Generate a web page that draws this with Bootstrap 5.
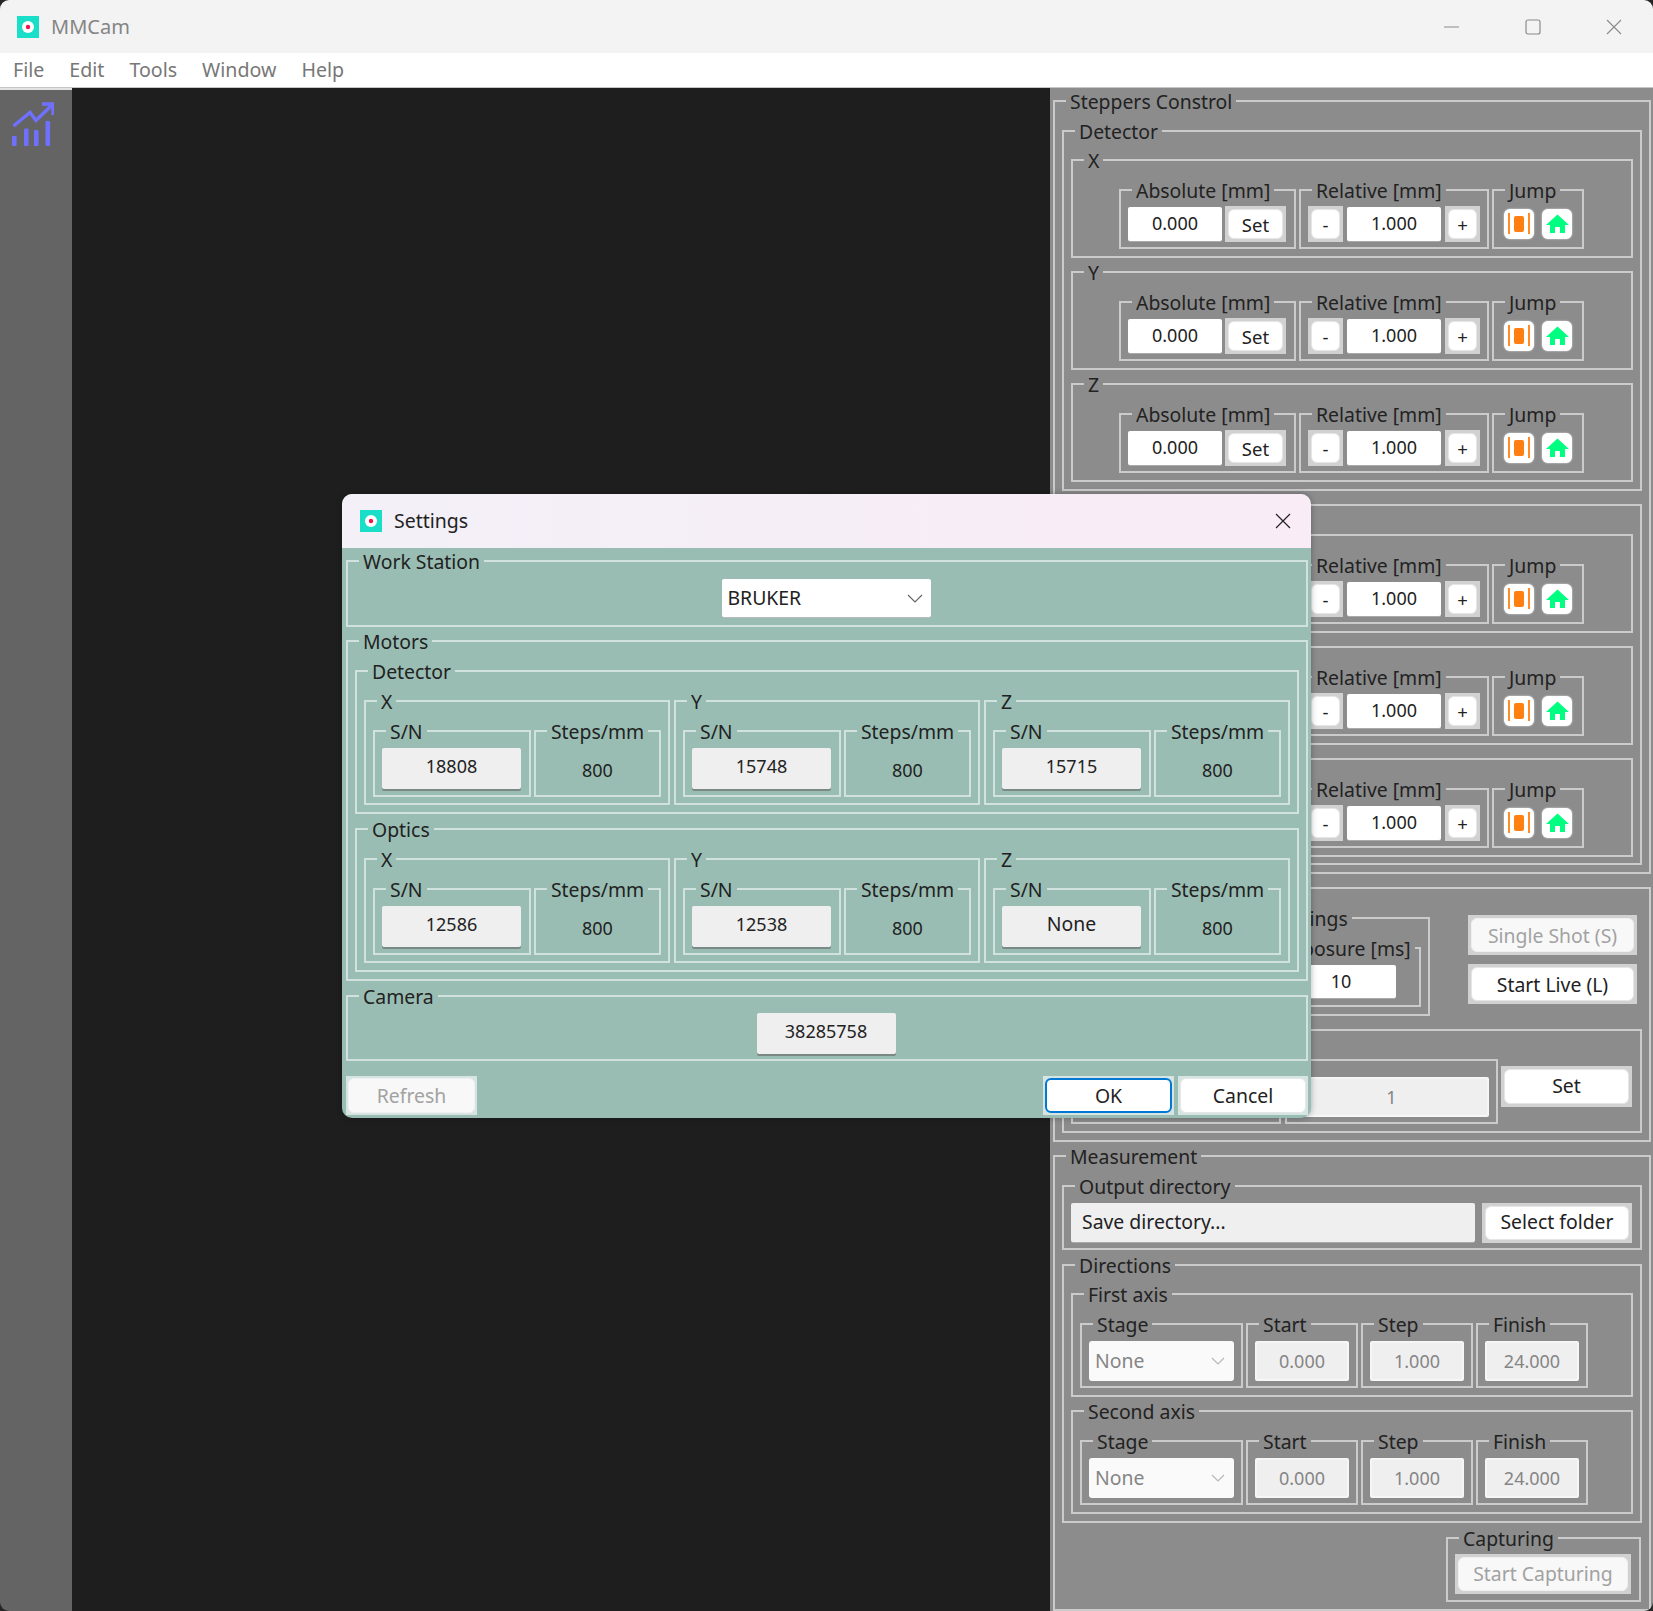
<!DOCTYPE html>
<html lang="en">
<head>
    <meta charset="UTF-8">
    <meta name="viewport" content="width=device-width, initial-scale=1.0">
    <title>MMCam</title>
    <link href="https://cdn.jsdelivr.net/npm/bootstrap@5.3.0/dist/css/bootstrap.min.css" rel="stylesheet">
    <style>
        html, body { height: 100%; }
        body { margin: 0; background: #262626; overflow: hidden; font-family: "Noto Sans", sans-serif; font-size: 19.4px; color: #222; }
        .app-window { width: 1653px; height: 1611px; border-radius: 9px; overflow: hidden; }
        .title-bar { height: 53px; background: #f3f3f3; padding-left: 17px; color: #858585; font-size: 20px; }
        .app-icon { width: 22px; height: 22px; margin-right: 12px; flex: none; }
        .win-btns { margin-right: -1px; }
        .win-btn { width: 81px; }
        .menu-row { height: 35px; background: #fff; border-bottom: 1px solid #c6c6c6; padding-left: 13px; color: #777; gap: 25px; line-height: 34px; font-size: 19.6px; }
        .work-area { height: 1523px; }
        .side-tools { width: 72px; background: #646464; border-top: 2px solid #e2e2e2; padding: 12px 0 0 12px; }
        .view-area { width: 978px; background: #1e1e1e; }
        .right-panel { width: 603px; background: #8c8c8c; padding: 0 2px 0 3px; gap: 1px; }

        .gb { border: 2px solid rgba(255, 255, 255, .55); padding: 4px 7px 7px; margin: 0; min-width: 0; }
        .gb > legend { float: none; width: auto; height: 26px; line-height: 28px; margin: 0 0 0 4px; padding: 0 4px; font-size: 19.4px; white-space: nowrap; }
        .gb-tight { padding-bottom: 5px; }
        .gb-t3 { padding-top: 3px; }
        .gb-b6 { padding-bottom: 6px; }
        .stack { gap: 1px; }
        .stack-2 { gap: 2px; }
        .abs-row { margin-left: 39px; gap: 3px; }
        .rel-row { margin-left: 219px; gap: 3px; }
        .abs-box { width: 177px; }
        .rel-box { width: 190px; }
        .jump-box { width: 92px; }
        .jump-inner { margin-left: 3px; }

        .form-control.num-box { width: 94px; height: 34px; padding: 0; border: 0; border-radius: 2px; background: #fff; box-shadow: 0 1px 0 #aaa; font-size: 18px; line-height: 32px; text-align: center; color: #222; }
        .form-control.num-box.off { height: 40px; line-height: 36px; background: #efefef; border: 2px solid #f6f6f6; box-shadow: none; color: #858585; }
        .qbtn { display: block; padding: 3px; border: 0; border-radius: 0; background: rgba(255, 255, 255, .6); font-size: 19.4px; line-height: 1; color: #222; }
        .qbtn:hover, .qbtn:disabled { background: rgba(255, 255, 255, .6); color: #222; border: 0; opacity: 1; }
        .qbtn > span { display: flex; align-items: center; justify-content: center; height: 100%; background: #fff; border: 1px solid #e6e6e6; border-radius: 6px; }
        .qbtn:disabled > span { background: #f8f8f8; border-color: #f0f0f0; color: #a2a2a2; }
        .qbtn-set { width: 61px; height: 36px; margin-left: 3px; margin-top: -1px; font-size: 18.5px; }
        .qbtn-step { width: 35px; height: 36px; margin-top: -1px; font-size: 18.5px; }
        .qbtn-set > span, .qbtn-step > span { padding-top: 2px; }
        .qbtn-ok > span { border: 2px solid #0078d4; }
        .jump-btn { width: 30px; height: 30px; padding: 0; border: 0; background: #fff; border-radius: 6px; margin-top: 2px; box-shadow: 0 0 2px rgba(255, 255, 255, .8); }
        .jump-btn svg { display: block; }
        .rel-inner { gap: 4px; }

        .cam-row { width: 580px; }
        .cam-settings { width: 173px; }
        .cam-expo { width: 155px; }
        .cam-expo > legend.expo-label { margin-left: 2px; }
        .cam-expo .form-control.num-box { width: 110px; height: 33px; margin-left: auto; margin-right: 16px; }
        .shot-col { width: 169px; margin: 10px 5px 0 38px; gap: 9px; }
        .shot-col .qbtn { height: 40px; }
        .shot-col .qbtn > span { padding-top: 1px; }
        .frame-a { width: 210px; }
        .frame-b { width: 213px; margin-left: 4px; }
        .frame-b .form-control.num-box { width: 100%; }
        .frame-set { width: 131px; height: 41px; margin-left: 3px; margin-top: 19px; }
        .frame-set > span, .dir-btn > span { padding-bottom: 2px; }

        .dir-box { flex: 1; height: 39px; padding: 0 0 2px 11px; background: #efefef; border-radius: 2px; box-shadow: 0 1px 0 #aaa; }
        .dir-btn { width: 150px; margin: 0 1px 0 7px; height: 40px; }
        .dir-group { margin-top: 2px; }
        .stage-box { width: 163px; }
        .val-box { width: 112px; }
        .axis-row { gap: 3px; }
        .combo { background: #fff; border-radius: 2px; box-shadow: 0 1px 0 #bbb; }
        .combo-off { width: 145px; height: 40px; padding: 0 9px 0 6px; background: #fafafa; color: #858585; border-radius: 3px; box-shadow: none; }
        .capture-box { width: 195px; margin: 2px 1px 0 auto; padding-top: 3px; }
        .capture-box .qbtn { width: 176px; height: 40px; }

        .settings-dlg { left: 342px; top: 494px; width: 969px; height: 624px; border-radius: 10px; overflow: hidden; background: #99bdb3; box-shadow: 0 0 6px rgba(0, 0, 0, .3); }
        .dlg-title { height: 54px; padding: 0 20px 0 18px; background: linear-gradient(90deg, #f3f0f8, #f9ecf6); font-size: 19.5px; }
        .dlg-body { padding: 0 3px 0 4px; gap: 1px; }
        .wk-station { height: 79px; padding-right: 9px; }
        .combo-bruker { width: 209px; height: 38px; margin: 1px auto 0; padding: 0 8px 0 6px; }
        .sn-btn { height: 41px; padding: 0 0 5px; border: 0; border-radius: 2px; background: #efefef; box-shadow: 0 2px 0 #7b8985; font-size: 18px; color: #222; }
        .sn-btn:hover { background: #efefef; color: #222; }
        .sn-word { font-size: 19.4px; }
        .axis-box { flex: 1 1 0; padding-bottom: 6px; }
        .sn-box { width: 159px; padding-bottom: 6px; }
        .sn-box .sn-btn { width: 139px; display: block; }
        .step-box { width: 128px; padding-bottom: 6px; }
        .step-val { height: 41px; padding-top: 4px; font-size: 18px; }
        .cam-group { margin-top: 1px; padding-right: 9px; padding-bottom: 5px; }
        .cam-btn { width: 139px; margin: 0 auto; display: block; }
        .dlg-foot { margin-top: 14px; }
        .dlg-foot .qbtn { height: 39px; padding: 2px; }
        .dlg-foot .qbtn-ref { width: 131px; }
        .dlg-foot .qbtn-ok { width: 131px; margin-left: auto; }
        .dlg-foot .qbtn-cancel { width: 130px; margin-left: 4px; }
    </style>
</head>
<body>
<div class="app-window d-flex flex-column position-relative">
    <div class="title-bar d-flex align-items-center">
        <svg class="app-icon" viewBox="0 0 22 22"><rect width="22" height="22" fill="#1adfc8"/><circle cx="11" cy="11" r="6" fill="#fff"/><circle cx="11" cy="11" r="2.2" fill="#f0134d"/></svg>
        <span>MMCam</span>
        <div class="win-btns d-flex ms-auto">
            <div class="win-btn d-flex justify-content-center"><svg width="16" height="16" viewBox="0 0 16 16"><path d="M0 8h15" stroke="#8a8a8a" fill="none"/></svg></div>
            <div class="win-btn d-flex justify-content-center"><svg width="16" height="16" viewBox="0 0 16 16"><rect x="1" y="1" width="14" height="14" rx="2" stroke="#8a8a8a" fill="none" stroke-width="1.2"/></svg></div>
            <div class="win-btn d-flex justify-content-center"><svg width="16" height="16" viewBox="0 0 16 16"><path d="M1 1l14 14M15 1L1 15" stroke="#8a8a8a" fill="none" stroke-width="1.1"/></svg></div>
        </div>
    </div>
    <div class="menu-row d-flex">
        <span>File</span><span>Edit</span><span>Tools</span><span>Window</span><span>Help</span>
    </div>
    <div class="work-area d-flex">
        <div class="side-tools">
            <svg width="42" height="44" viewBox="0 0 42 44" fill="none"><path d="M1.5 24L18 10.5l6 8L40 3M30 2h11v11" stroke="#7070ff" stroke-width="3.4"/><g fill="#7070ff"><rect x="0" y="34" width="4.6" height="10" rx="1.2"/><rect x="12" y="26.5" width="4.6" height="17.5" rx="1.2"/><rect x="22" y="28" width="4.6" height="16" rx="1.2"/><rect x="33.5" y="19" width="4.6" height="25" rx="1.2"/></g></svg>
        </div>
        <div class="view-area"></div>
        <div class="right-panel d-flex flex-column">
            <fieldset class="gb">
                <legend>Steppers Constrol</legend>
                <div class="d-flex flex-column stack">
                    <fieldset class="gb gb-t3">
                        <legend>Detector</legend>
                        <div class="d-flex flex-column stack">
                            <fieldset class="gb">
                                <legend>X</legend>
                                <div class="abs-row d-flex">
                                    <fieldset class="gb gb-tight abs-box"><legend>Absolute [mm]</legend><div class="d-flex"><div class="form-control num-box">0.000</div><button class="btn qbtn qbtn-set"><span>Set</span></button></div></fieldset>
                                    <fieldset class="gb gb-tight rel-box"><legend>Relative [mm]</legend><div class="rel-inner d-flex"><button class="btn qbtn qbtn-step"><span>-</span></button><div class="form-control num-box">1.000</div><button class="btn qbtn qbtn-step"><span>+</span></button></div></fieldset>
                                    <fieldset class="gb gb-tight jump-box"><legend>Jump</legend><div class="jump-inner d-flex gap-2"><button class="btn jump-btn"><svg width="30" height="30" viewBox="0 0 30 30"><path d="M5 4v21M25 4v21" stroke="#ff8010" stroke-width="1.8"/><rect x="10" y="7" width="10" height="16" rx="2" fill="#ff8010"/></svg></button><button class="btn jump-btn"><svg width="30" height="30" viewBox="0 0 30 30"><path d="M4 16L15.5 5.5 27 16h-4v8h-5v-6h-5v6H8v-8z" fill="#00ff80"/></svg></button></div></fieldset>
                                </div>
                            </fieldset>
                            <fieldset class="gb">
                                <legend>Y</legend>
                                <div class="abs-row d-flex">
                                    <fieldset class="gb gb-tight abs-box"><legend>Absolute [mm]</legend><div class="d-flex"><div class="form-control num-box">0.000</div><button class="btn qbtn qbtn-set"><span>Set</span></button></div></fieldset>
                                    <fieldset class="gb gb-tight rel-box"><legend>Relative [mm]</legend><div class="rel-inner d-flex"><button class="btn qbtn qbtn-step"><span>-</span></button><div class="form-control num-box">1.000</div><button class="btn qbtn qbtn-step"><span>+</span></button></div></fieldset>
                                    <fieldset class="gb gb-tight jump-box"><legend>Jump</legend><div class="jump-inner d-flex gap-2"><button class="btn jump-btn"><svg width="30" height="30" viewBox="0 0 30 30"><path d="M5 4v21M25 4v21" stroke="#ff8010" stroke-width="1.8"/><rect x="10" y="7" width="10" height="16" rx="2" fill="#ff8010"/></svg></button><button class="btn jump-btn"><svg width="30" height="30" viewBox="0 0 30 30"><path d="M4 16L15.5 5.5 27 16h-4v8h-5v-6h-5v6H8v-8z" fill="#00ff80"/></svg></button></div></fieldset>
                                </div>
                            </fieldset>
                            <fieldset class="gb">
                                <legend>Z</legend>
                                <div class="abs-row d-flex">
                                    <fieldset class="gb gb-tight abs-box"><legend>Absolute [mm]</legend><div class="d-flex"><div class="form-control num-box">0.000</div><button class="btn qbtn qbtn-set"><span>Set</span></button></div></fieldset>
                                    <fieldset class="gb gb-tight rel-box"><legend>Relative [mm]</legend><div class="rel-inner d-flex"><button class="btn qbtn qbtn-step"><span>-</span></button><div class="form-control num-box">1.000</div><button class="btn qbtn qbtn-step"><span>+</span></button></div></fieldset>
                                    <fieldset class="gb gb-tight jump-box"><legend>Jump</legend><div class="jump-inner d-flex gap-2"><button class="btn jump-btn"><svg width="30" height="30" viewBox="0 0 30 30"><path d="M5 4v21M25 4v21" stroke="#ff8010" stroke-width="1.8"/><rect x="10" y="7" width="10" height="16" rx="2" fill="#ff8010"/></svg></button><button class="btn jump-btn"><svg width="30" height="30" viewBox="0 0 30 30"><path d="M4 16L15.5 5.5 27 16h-4v8h-5v-6h-5v6H8v-8z" fill="#00ff80"/></svg></button></div></fieldset>
                                </div>
                            </fieldset>
                        </div>
                    </fieldset>
                    <fieldset class="gb gb-b6">
                        <legend></legend>
                        <div class="d-flex flex-column stack">
                            <fieldset class="gb">
                                <legend></legend>
                                <div class="rel-row d-flex">
                                    <fieldset class="gb gb-tight rel-box"><legend>Relative [mm]</legend><div class="rel-inner d-flex"><button class="btn qbtn qbtn-step"><span>-</span></button><div class="form-control num-box">1.000</div><button class="btn qbtn qbtn-step"><span>+</span></button></div></fieldset>
                                    <fieldset class="gb gb-tight jump-box"><legend>Jump</legend><div class="jump-inner d-flex gap-2"><button class="btn jump-btn"><svg width="30" height="30" viewBox="0 0 30 30"><path d="M5 4v21M25 4v21" stroke="#ff8010" stroke-width="1.8"/><rect x="10" y="7" width="10" height="16" rx="2" fill="#ff8010"/></svg></button><button class="btn jump-btn"><svg width="30" height="30" viewBox="0 0 30 30"><path d="M4 16L15.5 5.5 27 16h-4v8h-5v-6h-5v6H8v-8z" fill="#00ff80"/></svg></button></div></fieldset>
                                </div>
                            </fieldset>
                            <fieldset class="gb">
                                <legend></legend>
                                <div class="rel-row d-flex">
                                    <fieldset class="gb gb-tight rel-box"><legend>Relative [mm]</legend><div class="rel-inner d-flex"><button class="btn qbtn qbtn-step"><span>-</span></button><div class="form-control num-box">1.000</div><button class="btn qbtn qbtn-step"><span>+</span></button></div></fieldset>
                                    <fieldset class="gb gb-tight jump-box"><legend>Jump</legend><div class="jump-inner d-flex gap-2"><button class="btn jump-btn"><svg width="30" height="30" viewBox="0 0 30 30"><path d="M5 4v21M25 4v21" stroke="#ff8010" stroke-width="1.8"/><rect x="10" y="7" width="10" height="16" rx="2" fill="#ff8010"/></svg></button><button class="btn jump-btn"><svg width="30" height="30" viewBox="0 0 30 30"><path d="M4 16L15.5 5.5 27 16h-4v8h-5v-6h-5v6H8v-8z" fill="#00ff80"/></svg></button></div></fieldset>
                                </div>
                            </fieldset>
                            <fieldset class="gb">
                                <legend></legend>
                                <div class="rel-row d-flex">
                                    <fieldset class="gb gb-tight rel-box"><legend>Relative [mm]</legend><div class="rel-inner d-flex"><button class="btn qbtn qbtn-step"><span>-</span></button><div class="form-control num-box">1.000</div><button class="btn qbtn qbtn-step"><span>+</span></button></div></fieldset>
                                    <fieldset class="gb gb-tight jump-box"><legend>Jump</legend><div class="jump-inner d-flex gap-2"><button class="btn jump-btn"><svg width="30" height="30" viewBox="0 0 30 30"><path d="M5 4v21M25 4v21" stroke="#ff8010" stroke-width="1.8"/><rect x="10" y="7" width="10" height="16" rx="2" fill="#ff8010"/></svg></button><button class="btn jump-btn"><svg width="30" height="30" viewBox="0 0 30 30"><path d="M4 16L15.5 5.5 27 16h-4v8h-5v-6h-5v6H8v-8z" fill="#00ff80"/></svg></button></div></fieldset>
                                </div>
                            </fieldset>
                        </div>
                    </fieldset>
                </div>
            </fieldset>

            <fieldset class="gb">
                <legend></legend>
                <div class="d-flex flex-column stack">
                    <div class="cam-row d-flex justify-content-end">
                        <fieldset class="gb cam-settings">
                            <legend>Settings</legend>
                            <fieldset class="gb cam-expo"><legend class="expo-label">Exposure [ms]</legend><div class="form-control num-box">10</div></fieldset>
                        </fieldset>
                        <div class="shot-col d-flex flex-column">
                            <button class="btn qbtn" disabled><span>Single Shot (S)</span></button>
                            <button class="btn qbtn"><span>Start Live (L)</span></button>
                        </div>
                    </div>
                    <fieldset class="gb">
                        <legend></legend>
                        <div class="d-flex align-items-start">
                            <fieldset class="gb gb-tight frame-a align-self-stretch"><legend></legend></fieldset>
                            <fieldset class="gb gb-tight frame-b"><legend></legend><div class="form-control num-box off">1</div></fieldset>
                            <button class="btn qbtn frame-set"><span>Set</span></button>
                        </div>
                    </fieldset>
                </div>
            </fieldset>

            <fieldset class="gb flex-grow-1">
                <legend>Measurement</legend>
                <fieldset class="gb gb-tight">
                    <legend>Output directory</legend>
                    <div class="d-flex">
                        <div class="dir-box d-flex align-items-center">Save directory...</div>
                        <button class="btn qbtn dir-btn"><span>Select folder</span></button>
                    </div>
                </fieldset>
                <fieldset class="gb gb-t3 dir-group">
                    <legend>Directions</legend>
                    <div class="d-flex flex-column stack">
                        <fieldset class="gb">
                            <legend>First axis</legend>
                            <div class="axis-row d-flex">
                                <fieldset class="gb gb-tight stage-box"><legend>Stage</legend><div class="combo combo-off d-flex align-items-center justify-content-between">None<svg width="14" height="8" viewBox="0 0 14 8" fill="none"><path d="M1 1l6 6 6-6" stroke="#b8b8b8" stroke-width="1.2"/></svg></div></fieldset>
                                <fieldset class="gb gb-tight val-box"><legend>Start</legend><div class="form-control num-box off">0.000</div></fieldset>
                                <fieldset class="gb gb-tight val-box"><legend>Step</legend><div class="form-control num-box off">1.000</div></fieldset>
                                <fieldset class="gb gb-tight val-box"><legend>Finish</legend><div class="form-control num-box off">24.000</div></fieldset>
                            </div>
                        </fieldset>
                        <fieldset class="gb">
                            <legend>Second axis</legend>
                            <div class="axis-row d-flex">
                                <fieldset class="gb gb-tight stage-box"><legend>Stage</legend><div class="combo combo-off d-flex align-items-center justify-content-between">None<svg width="14" height="8" viewBox="0 0 14 8" fill="none"><path d="M1 1l6 6 6-6" stroke="#b8b8b8" stroke-width="1.2"/></svg></div></fieldset>
                                <fieldset class="gb gb-tight val-box"><legend>Start</legend><div class="form-control num-box off">0.000</div></fieldset>
                                <fieldset class="gb gb-tight val-box"><legend>Step</legend><div class="form-control num-box off">1.000</div></fieldset>
                                <fieldset class="gb gb-tight val-box"><legend>Finish</legend><div class="form-control num-box off">24.000</div></fieldset>
                            </div>
                        </fieldset>
                    </div>
                </fieldset>
                <fieldset class="gb gb-b6 capture-box">
                    <legend>Capturing</legend>
                    <button class="btn qbtn" disabled><span>Start Capturing</span></button>
                </fieldset>
            </fieldset>
        </div>
    </div>

    <div class="settings-dlg position-absolute">
        <div class="dlg-title d-flex align-items-center">
            <svg class="app-icon" viewBox="0 0 22 22"><rect width="22" height="22" fill="#1adfc8"/><circle cx="11" cy="11" r="6" fill="#fff"/><circle cx="11" cy="11" r="2.2" fill="#f0134d"/></svg>
            <span>Settings</span>
            <svg class="ms-auto" width="16" height="16" viewBox="0 0 16 16"><path d="M1 1l14 14M15 1L1 15" stroke="#222" fill="none" stroke-width="1.2"/></svg>
        </div>
        <div class="dlg-body d-flex flex-column">
            <fieldset class="gb wk-station">
                <legend>Work Station</legend>
                <div class="combo combo-bruker d-flex align-items-center justify-content-between">BRUKER<svg width="16" height="9" viewBox="0 0 16 9" fill="none"><path d="M1 1l7 7 7-7" stroke="#666" stroke-width="1.2"/></svg></div>
            </fieldset>
            <fieldset class="gb">
                <legend>Motors</legend>
                <div class="d-flex flex-column stack-2">
                    <fieldset class="gb">
                        <legend>Detector</legend>
                        <div class="d-flex gap-1">
                            <fieldset class="gb axis-box"><legend>X</legend><div class="axis-row d-flex"><fieldset class="gb sn-box"><legend>S/N</legend><button class="btn sn-btn">18808</button></fieldset><fieldset class="gb step-box"><legend>Steps/mm</legend><div class="step-val d-flex align-items-center justify-content-center">800</div></fieldset></div></fieldset>
                            <fieldset class="gb axis-box"><legend>Y</legend><div class="axis-row d-flex"><fieldset class="gb sn-box"><legend>S/N</legend><button class="btn sn-btn">15748</button></fieldset><fieldset class="gb step-box"><legend>Steps/mm</legend><div class="step-val d-flex align-items-center justify-content-center">800</div></fieldset></div></fieldset>
                            <fieldset class="gb axis-box"><legend>Z</legend><div class="axis-row d-flex"><fieldset class="gb sn-box"><legend>S/N</legend><button class="btn sn-btn">15715</button></fieldset><fieldset class="gb step-box"><legend>Steps/mm</legend><div class="step-val d-flex align-items-center justify-content-center">800</div></fieldset></div></fieldset>
                        </div>
                    </fieldset>
                    <fieldset class="gb">
                        <legend>Optics</legend>
                        <div class="d-flex gap-1">
                            <fieldset class="gb axis-box"><legend>X</legend><div class="axis-row d-flex"><fieldset class="gb sn-box"><legend>S/N</legend><button class="btn sn-btn">12586</button></fieldset><fieldset class="gb step-box"><legend>Steps/mm</legend><div class="step-val d-flex align-items-center justify-content-center">800</div></fieldset></div></fieldset>
                            <fieldset class="gb axis-box"><legend>Y</legend><div class="axis-row d-flex"><fieldset class="gb sn-box"><legend>S/N</legend><button class="btn sn-btn">12538</button></fieldset><fieldset class="gb step-box"><legend>Steps/mm</legend><div class="step-val d-flex align-items-center justify-content-center">800</div></fieldset></div></fieldset>
                            <fieldset class="gb axis-box"><legend>Z</legend><div class="axis-row d-flex"><fieldset class="gb sn-box"><legend>S/N</legend><button class="btn sn-btn sn-word">None</button></fieldset><fieldset class="gb step-box"><legend>Steps/mm</legend><div class="step-val d-flex align-items-center justify-content-center">800</div></fieldset></div></fieldset>
                        </div>
                    </fieldset>
                </div>
            </fieldset>
            <fieldset class="gb cam-group">
                <legend>Camera</legend>
                <button class="btn sn-btn cam-btn">38285758</button>
            </fieldset>
            <div class="dlg-foot d-flex">
                <button class="btn qbtn qbtn-ref" disabled><span>Refresh</span></button>
                <button class="btn qbtn qbtn-ok"><span>OK</span></button>
                <button class="btn qbtn qbtn-cancel"><span>Cancel</span></button>
            </div>
        </div>
    </div>
</div>
<script src="https://cdn.jsdelivr.net/npm/bootstrap@5.3.0/dist/js/bootstrap.bundle.min.js"></script>
</body>
</html>
